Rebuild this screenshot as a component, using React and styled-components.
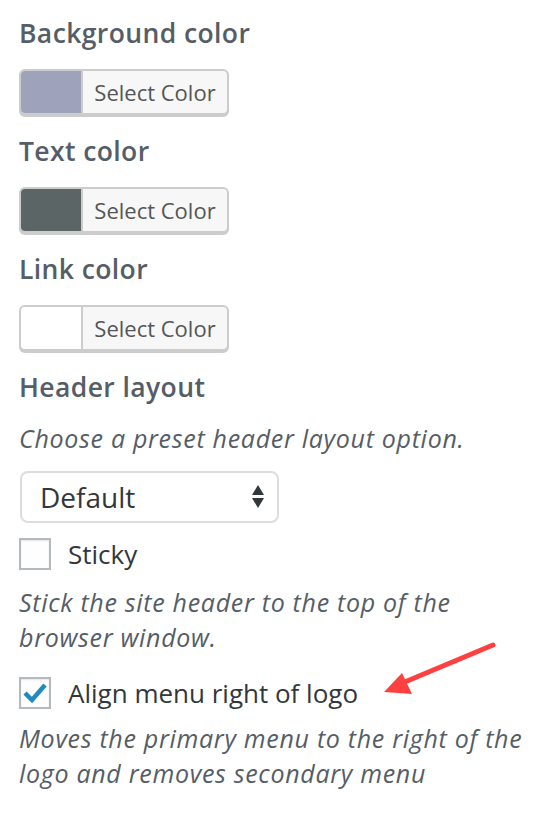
import React from 'react';
import styled, { createGlobalStyle } from 'styled-components';

const GlobalStyle = createGlobalStyle`
  html, body {
    margin: 0;
    padding: 0;
    background: #fff;
  }
  body {
    font-family: 'Open Sans', 'Liberation Sans', sans-serif;
    color: #555d66;
  }
`;

const Panel = styled.div`
  position: relative;
  width: 556px;
  height: 828px;
  padding: 15px 30px 0 19px;
  box-sizing: border-box;
`;

const Control = styled.div`
  margin-bottom: 18px;
`;

const Title = styled.h3`
  margin: 0 0 ${(p) => p.mb || 18}px;
  font-size: 26.5px;
  font-weight: 600;
  letter-spacing: 0.4px;
  line-height: 36px;
  color: #555d66;
`;

const Description = styled.p`
  margin: ${(p) => p.m || '0'};
  font-size: 25px;
  font-style: italic;
  letter-spacing: 0.7px;
  line-height: 35px;
  color: #555d66;
`;

const ColorButton = styled.button`
  display: flex;
  align-items: stretch;
  height: 46px;
  width: 210px;
  padding: 0;
  border: 2px solid #ccc;
  border-radius: 6px;
  background: #f7f7f7;
  box-shadow: 0 2px 0 #ccc;
  overflow: hidden;
  font-family: inherit;
  cursor: pointer;
`;

const Swatch = styled.span`
  width: 60px;
  background: ${(p) => p.color};
  border-right: 2px solid #ccc;
`;

const ButtonLabel = styled.span`
  flex: 1;
  display: flex;
  align-items: center;
  justify-content: center;
  font-size: 22px;
  color: #555;
`;

const SelectBox = styled.div`
  display: flex;
  align-items: center;
  justify-content: space-between;
  width: 259px;
  height: 52px;
  margin: 15px 0 14px 1px;
  padding: 0 12px 0 18px;
  box-sizing: border-box;
  border: 2px solid #ddd;
  border-radius: 8px;
  background: #fff;
  font-size: 28px;
  color: #32373c;
`;

const Updown = styled.svg`
  width: 14px;
  height: 24px;
`;

const CheckRow = styled.label`
  display: flex;
  align-items: center;
  gap: 17px;
  font-size: 26px;
  line-height: 34px;
  color: #32373c;
  margin: ${(p) => p.m || '0'};
`;

const Box = styled.span`
  display: flex;
  align-items: center;
  justify-content: center;
  width: 32px;
  height: 32px;
  box-sizing: border-box;
  border: 2px solid #b4b9be;
  background: #fefefe;
  box-shadow: inset 0 1px 2px rgba(0, 0, 0, 0.1);
`;

const Arrow = styled.svg`
  position: absolute;
  left: 380px;
  top: 638px;
  width: 120px;
  height: 64px;
`;

const colors = [
  { title: 'Background color', color: '#9ea3bb' },
  { title: 'Text color', color: '#5c6566' },
  { title: 'Link color', color: '#ffffff' },
];

const App = () => {
  return (
    <>
      <GlobalStyle />
      <Panel>
        {colors.map((c) => (
          <Control key={c.title}>
            <Title>{c.title}</Title>
            <ColorButton>
              <Swatch color={c.color} />
              <ButtonLabel>Select Color</ButtonLabel>
            </ColorButton>
          </Control>
        ))}

        <div>
          <Title mb={16}>Header layout</Title>
          <Description>Choose a preset header layout option.</Description>
          <SelectBox>
            <span>Default</span>
            <Updown viewBox="0 0 14 24">
              <path d="M7 0 L13 10 L1 10 Z M1 13 L13 13 L7 23 Z" fill="#32373c" />
            </Updown>
          </SelectBox>
          <CheckRow>
            <Box />
            Sticky
          </CheckRow>
          <Description m="14px 0 0">
            Stick the site header to the top of the browser window.
          </Description>
          <CheckRow m="21px 0 11px">
            <Box>
              <svg width="24" height="22" viewBox="0 0 24 22">
                <path d="M2 11 L9 18 L22 3" fill="none" stroke="#1e8cbe" strokeWidth="4.5" />
              </svg>
            </Box>
            Align menu right of logo
          </CheckRow>
          <Description>
            Moves the primary menu to the right of the logo and removes secondary menu
          </Description>
        </div>

        <Arrow viewBox="0 0 120 64">
          <line x1="113" y1="7" x2="20" y2="46" stroke="#ff4040" strokeWidth="5" strokeLinecap="round" />
          <polygon points="4,54 22,35 32,56" fill="#ff4040" />
        </Arrow>
      </Panel>
    </>
  );
};

export default App;
